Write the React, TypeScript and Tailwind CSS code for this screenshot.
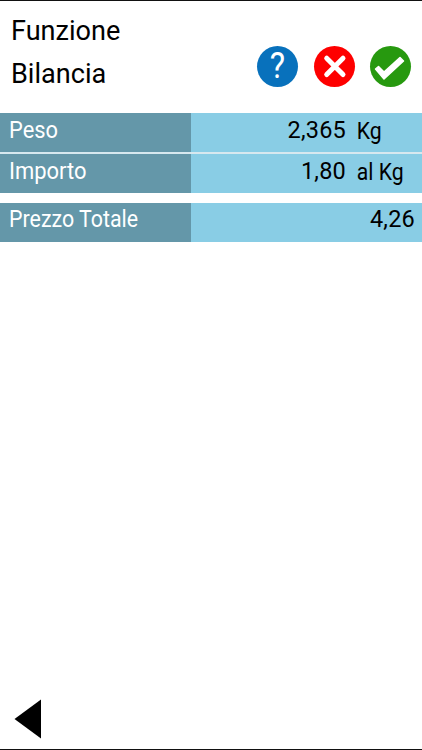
import type { ReactNode } from 'react';

interface RowProps {
  label: string;
  labelClass: string;
  children: ReactNode;
}

function Row({ label, labelClass, children }: RowProps) {
  return (
    <div className="flex h-[39px] text-[23.5px] leading-[34px]">
      <div className="w-[191px] shrink-0 bg-[#6497a9] pl-[9px] text-white">
        <span className={`inline-block origin-left ${labelClass}`}>{label}</span>
      </div>
      <div className="flex flex-1 bg-[#89cde5] text-black">{children}</div>
    </div>
  );
}

function Header() {
  return (
    <header className="flex h-[111px] justify-between px-[11px]">
      <h1 className="origin-left scale-x-[0.95] pt-[8px] text-[28.5px] leading-[43px] text-black">
        <span className="block">Funzione</span>
        <span className="block">Bilancia</span>
      </h1>
      <div className="flex gap-[15.5px] pt-[44.5px]">
        <button aria-label="Aiuto" className="flex h-[41px] w-[41px] items-center justify-center rounded-full bg-[#0871bc] text-[36px] leading-none text-white">
          <span className="-mt-px scale-x-90">?</span>
        </button>
        <button aria-label="Annulla" className="h-[41px] w-[41px] rounded-full bg-[#fe0000]">
          <svg viewBox="0 0 41 41" className="h-full w-full">
            <path d="M12.7 12.2 L29 28.5 M29 12.2 L12.7 28.5" stroke="white" strokeWidth="5" strokeLinecap="round" />
          </svg>
        </button>
        <button aria-label="Conferma" className="h-[41px] w-[41px] rounded-full bg-[#27990f]">
          <svg viewBox="0 0 41 41" className="h-full w-full">
            <path d="M5.5 23 L8.5 20.5 L14 26 L30 11.5 L33.5 15 L14 33 Z" fill="white" stroke="white" strokeWidth="1.5" strokeLinejoin="round" />
          </svg>
        </button>
      </div>
    </header>
  );
}

export default function App() {
  return (
    <div className="flex h-[750px] w-[422px] flex-col border-y border-[#111] bg-white font-['Roboto',sans-serif]">
      <Header />
      <main className="flex-1 pt-px">
        <Row label="Peso" labelClass="scale-x-[0.93]">
          <span className="w-[155px] text-right tracking-[0.2px]">2,365</span>
          <span className="origin-left scale-x-[0.9] pl-[12px] pt-px">Kg</span>
        </Row>
        <div className="h-[2px] bg-[#d7e8ef]" />
        <Row label="Importo" labelClass="scale-x-[0.935]">
          <span className="w-[155px] text-right tracking-[0.2px]">1,80</span>
          <span className="origin-left scale-x-[0.9] pl-[12px] pt-px">al Kg</span>
        </Row>
        <div className="h-[10px]" />
        <Row label="Prezzo Totale" labelClass="-translate-y-px scale-x-[0.91]">
          <span className="-mt-px flex-1 pr-[7px] text-right tracking-[0.2px]">4,26</span>
        </Row>
      </main>
      <footer className="flex pb-[10px] pl-[14px]">
        <button aria-label="Indietro">
          <svg viewBox="0 0 27 40" className="h-[40px] w-[27px]">
            <path d="M0.5 20 L27 0.5 V39.5 Z" fill="black" />
          </svg>
        </button>
      </footer>
    </div>
  );
}
